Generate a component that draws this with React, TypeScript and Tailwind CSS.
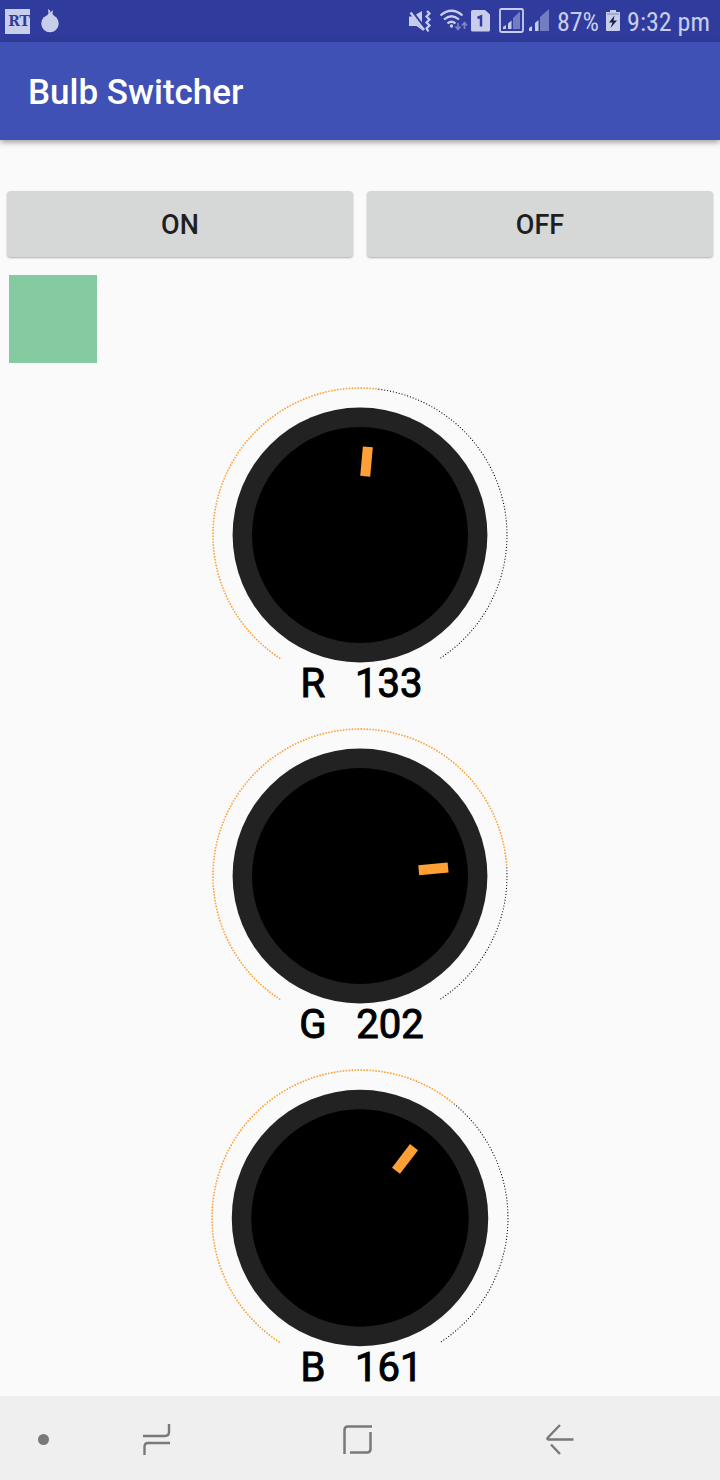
import { useState } from "react";

const FIRST_ANGLE = 32;
const DEGREES_PER_STEP = 1.151;
const MAX = 255;

function polar(step: number, radius: number) {
  const a = ((FIRST_ANGLE + step * DEGREES_PER_STEP) * Math.PI) / 180;
  return { x: 150 - Math.sin(a) * radius, y: 150 + Math.cos(a) * radius };
}

type KnobProps = {
  label: string;
  value: number;
  dialClass?: string;
  onChange: (value: number) => void;
};

function Knob({ label, value, dialClass = "w-[300px]", onChange }: KnobProps) {
  const inner = polar(value, 59);
  const outer = polar(value, 88.5);
  const id = `knob-${label}`;
  return (
    <div className="flex flex-col items-center pt-5">
      <div className={`relative ${dialClass}`}>
        <svg viewBox="0 0 300 273" className="block w-full overflow-visible" aria-hidden="true">
          {Array.from({ length: MAX + 1 }, (_, i) => {
            const p = polar(i + 1, 147);
            return i <= value ? (
              <circle key={i} cx={p.x} cy={p.y} r="0.9" fill="#ffa036" />
            ) : (
              <circle key={i} cx={p.x} cy={p.y} r="0.6" fill="#000" />
            );
          })}
          <circle cx="150" cy="150" r="127.4" fill="#222" />
          <circle cx="150" cy="150" r="108" fill="#000" />
          <line x1={inner.x} y1={inner.y} x2={outer.x} y2={outer.y} stroke="#ffa036" strokeWidth="10" />
        </svg>
        <input
          id={id}
          type="range"
          min={0}
          max={MAX}
          value={value}
          onChange={(e) => onChange(Number(e.target.value))}
          className="absolute inset-0 h-full w-full cursor-pointer opacity-0"
        />
      </div>
      <label
        htmlFor={id}
        className="pt-1 pl-[3px] text-[40px] leading-[44px] whitespace-pre text-black [-webkit-text-stroke:1px_#000]"
      >
        {`${label}   ${value}`}
      </label>
    </div>
  );
}

function StatusBar() {
  return (
    <div className="flex h-[42px] items-center justify-between bg-[#303c9d] pr-[10px] pl-[5px] text-[#c9cdec]">
      <div className="flex items-center gap-[10px]">
        <span className="flex h-[25px] w-[25px] items-center justify-end overflow-hidden bg-[#c9cdec] font-['DejaVu_Serif',serif] text-[14px] leading-none font-bold text-[#303c9d]">
          RT
        </span>
        <svg width="20" height="26" viewBox="0 0 20 26" fill="currentColor" aria-hidden="true">
          <circle cx="10" cy="15.5" r="8.7" />
          <path d="M6 9 8.500 5.500 8 1l2 1.500.5 2L13 2l-.5 4 2.500 3z" />
        </svg>
      </div>
      <div className="flex items-center">
        <svg width="143" height="30" viewBox="407 6 143 30" fill="none" aria-hidden="true">
          <path d="M409 16.500h3.500l11 14.500-7-5H409zM416 14.500l6-3.500v11.500z" fill="currentColor" />
          <path d="m410.500 12.500 13.500 17.500" stroke="currentColor" strokeWidth="2.400" />
          <path d="m427 11 2.500 2.500-3 3 3 3-3 3 3 3-3 3 2 3" stroke="currentColor" strokeWidth="2.200" />
          <g stroke="currentColor" strokeWidth="2.300">
            <path d="M440.500 15.500q11-9.500 22 0" />
            <path d="M444 19.500q7.500-6.500 15 0" />
            <path d="M447.500 23.500q4-3.500 8 0" />
          </g>
          <circle cx="451.500" cy="26" r="1.700" fill="currentColor" />
          <path d="M458 23v6m-2.500-2.500 2.500 3 2.500-3M464.500 29v-6m-2.500 2.500 2.500-3 2.500 3" stroke="#7c85c6" strokeWidth="1.700" />
          <path d="M472.500 10H485l5 4.500V30q0 1.500-1.500 1.500h-16q-1.500 0-1.500-1.500V11.500q0-1.500 1.500-1.500z" fill="currentColor" />
          <path d="m477.500 18 3.500-1.500v10" stroke="#303c9d" strokeWidth="2.500" />
          <rect x="500" y="9" width="23" height="23" rx="1.500" stroke="currentColor" strokeWidth="1.800" />
          <path d="M513 29V18l7-6.500V29z" fill="#737dc2" />
          <path d="M503 29v-2l3-2v4zM508 29v-5.500l3.500-3V29z" fill="currentColor" />
          <path d="M540 31V17l9-8v22z" fill="#737dc2" />
          <path d="M529 31v-3l3-2v5zM535 31v-8l3.500-3v11z" fill="currentColor" />
        </svg>
        <span className="ml-[7px] pt-[2px] font-['Roboto_Condensed',Roboto,sans-serif] text-[26px] leading-[30px]">87%</span>
        <svg className="ml-[7px]" width="15" height="23" viewBox="0 0 15 23" aria-hidden="true">
          <path d="M4 0h6v2h4v18q0 1-1 1H1q-1 0-1-1V2h4z" fill="currentColor" />
          <path d="M1 4h12" stroke="#7c85c6" />
          <path d="M8.500 5.500 3 12.500h3.500L4.500 18l6.500-7.500H7.500z" fill="#18204c" />
        </svg>
        <span className="ml-[6px] pt-[2px] font-['Roboto_Condensed',Roboto,sans-serif] text-[26px] leading-[30px]">9:32 pm</span>
      </div>
    </div>
  );
}

const PUSH_BUTTON =
  "h-[66px] flex-1 rounded-[4px] bg-[#d6d7d7] pt-[2px] text-[27px] leading-8 font-medium text-[#1f1f1f] shadow-[0_1px_2px_rgba(0,0,0,0.3)]";

function NavigationBar() {
  return (
    <nav className="mt-auto flex h-[84px] bg-[#efefef] pr-[60px] text-[#797979]">
      <button type="button" aria-label="Hide navigation" className="flex w-[57px] items-center pt-[3px] pl-[38px]">
        <svg width="11" height="11" viewBox="0 0 11 11" aria-hidden="true">
          <circle cx="5.500" cy="5.500" r="5.500" fill="currentColor" />
        </svg>
      </button>
      <button type="button" aria-label="Recent apps" className="flex flex-1 items-center justify-center pt-[3px]">
        <svg width="30" height="32" viewBox="143 1424 30 32" fill="none" stroke="currentColor" strokeWidth="2.400" aria-hidden="true">
          <path d="M143 1436h22q4 0 4-4v-8M170 1443h-22q-3.500 0-3.500 4v8" />
        </svg>
      </button>
      <button type="button" aria-label="Home" className="flex flex-1 items-center justify-center pt-[3px]">
        <svg width="30" height="30" viewBox="344 1425 30 30" fill="none" stroke="currentColor" strokeWidth="2.500" className="overflow-visible" aria-hidden="true">
          <path d="M344.500 1454v-24q0-3.500 3.500-3.500h24M350 1452.500h17q3.500 0 3.500-3.500v-17" />
        </svg>
      </button>
      <button type="button" aria-label="Back" className="flex flex-1 items-center justify-center pt-[3px]">
        <svg width="28" height="32" viewBox="546 1424 28 32" fill="none" stroke="currentColor" strokeWidth="2.400" aria-hidden="true">
          <path d="m560 1425-12 12.500q-1.500 2 .5 2H573.500M551 1444.500l9 9.500" />
        </svg>
      </button>
    </nav>
  );
}

export default function App() {
  const [red, setRed] = useState(133);
  const [green, setGreen] = useState(202);
  const [blue, setBlue] = useState(161);

  return (
    <div className="flex min-h-screen flex-col bg-[#fafafa] font-[Roboto,sans-serif]">
      <StatusBar />
      <header className="flex h-[98px] items-center bg-[#3f51b5] px-7 pt-1 shadow-[0_2px_6px_rgba(0,0,0,0.4)]">
        <h1 className="text-[35px] leading-10 font-medium text-white">Bulb Switcher</h1>
      </header>
      <main>
        <div className="flex gap-[14px] px-[7px] pt-[51px]">
          <button type="button" className={PUSH_BUTTON}>
            ON
          </button>
          <button type="button" className={PUSH_BUTTON}>
            OFF
          </button>
        </div>
        <div
          className="mt-[18px] mb-[2px] ml-[9px] h-[88px] w-[88px]"
          style={{ backgroundColor: `rgb(${red}, ${green}, ${blue})` }}
        />
        <Knob label="R" value={red} onChange={setRed} />
        <Knob label="G" value={green} onChange={setGreen} />
        <Knob label="B" value={blue} onChange={setBlue} dialClass="w-[302px]" />
      </main>
      <NavigationBar />
    </div>
  );
}
